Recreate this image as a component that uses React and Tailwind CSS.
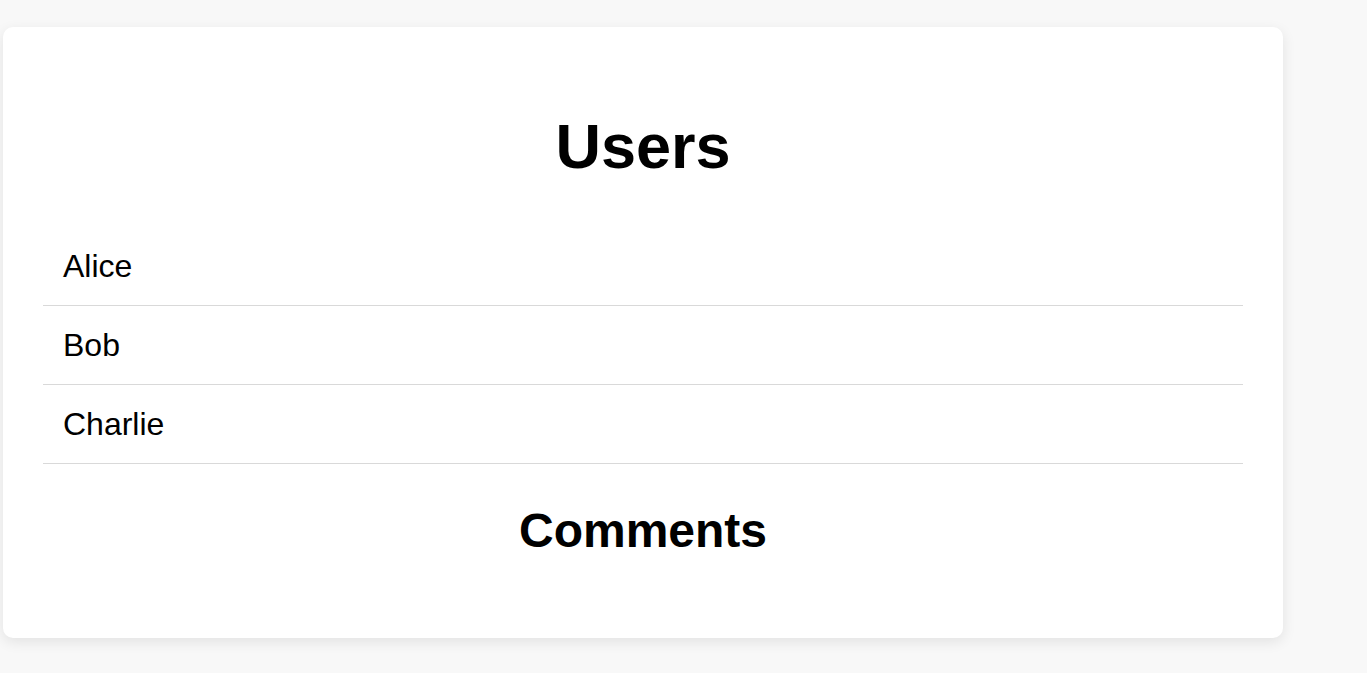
export default function App() {
  const users = ["Alice", "Bob", "Charlie"];
  return (
    <div className="min-h-[673px] bg-[#f8f8f8] pt-[27px] pl-[3px]" style={{ fontFamily: '"Liberation Sans", Arial, sans-serif' }}>
      <div className="w-[1280px] h-[611px] bg-white rounded-[10px] shadow-[0_4px_14px_rgba(0,0,0,0.09)] px-[40px] pt-[88px] text-black">
        <h1 className="text-center font-bold text-[63px] leading-none">Users</h1>
        <ul className="mt-[49px]">
          {users.map((u) => (
            <li key={u} className="h-[79px] leading-[78px] border-b border-[#d9d9d9] px-[20px] text-[32px]">
              {u}
            </li>
          ))}
        </ul>
        <h2 className="mt-[43px] text-center font-bold text-[48px] leading-none">Comments</h2>
      </div>
    </div>
  );
}
